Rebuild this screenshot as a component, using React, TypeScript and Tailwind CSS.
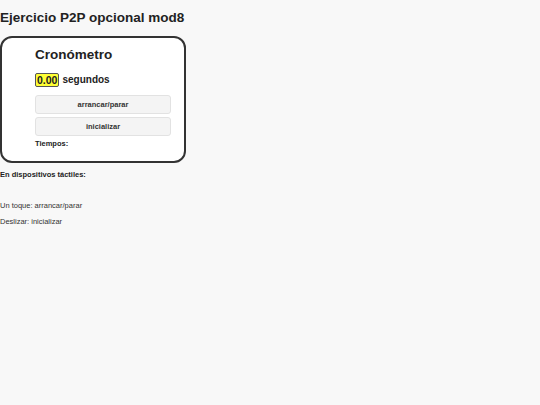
export default function App() {
  return (
    <div className="min-h-screen bg-[#f8f8f8] font-['Liberation_Sans',Arial,sans-serif] text-[#222]">
      <h1 className="pt-[10px] text-[13.5px] font-bold leading-[15px]">Ejercicio P2P opcional mod8</h1>

      <div className="mt-[11px] flex h-[127px] w-[186px] flex-col rounded-[12px] border-2 border-[#333] bg-white pl-[33px] pr-[13px] pt-[9px]">
        <h2 className="text-[13.5px] font-bold leading-[16px]">Cronómetro</h2>
        <p className="mt-[10px] flex items-center gap-[3px] text-[10px] font-bold leading-[12px]">
          <span className="rounded-[2px] border border-[#555] bg-[#ffff33] px-[1px] text-[10.5px]">0.00</span>
          <span>segundos</span>
        </p>
        <button className="mt-[8px] h-[19px] rounded-[3px] border border-[#e2e2e2] bg-[#f4f4f4] text-[7.5px] font-bold text-[#333]">
          arrancar/parar
        </button>
        <button className="mt-[3px] h-[19px] rounded-[3px] border border-[#e2e2e2] bg-[#f4f4f4] text-[7.5px] font-bold text-[#333]">
          inicializar
        </button>
        <p className="mt-[3px] text-[7.5px] font-bold leading-[10px]">Tiempos:</p>
      </div>

      <p className="mt-[7px] text-[7.5px] font-bold leading-[10px]">En dispositivos táctiles:</p>
      <p className="mt-[21px] text-[7.5px] leading-[10px] text-[#333]">Un toque: arrancar/parar</p>
      <p className="mt-[6px] text-[7.5px] leading-[10px] text-[#333]">Deslizar: inicializar</p>
    </div>
  );
}
